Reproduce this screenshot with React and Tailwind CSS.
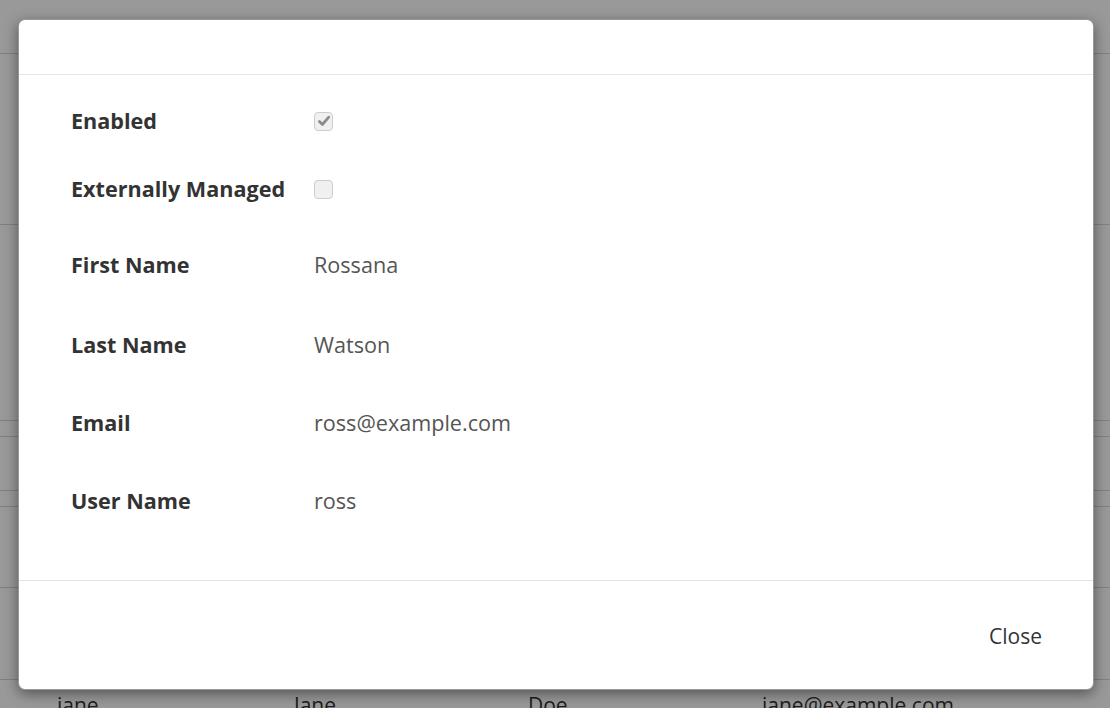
import { useState } from 'react';

const backdropRows = [54, 171, 196, 16, 54, 16, 81, 92];

function Checkbox({ checked }) {
  return (
    <span className="flex h-[19px] w-[19px] items-center justify-center rounded-[4px] border border-[#cdcdcd] bg-[#f0f0f0]">
      {checked && (
        <svg className="h-[14px] w-[14px]" viewBox="0 0 16 16" fill="none">
          <path d="M2.8 8.6 L6.2 12 L13.4 3.6" stroke="#8c8c8c" strokeWidth="3.2" strokeLinecap="round" strokeLinejoin="round" />
        </svg>
      )}
    </span>
  );
}

function Row({ label, children, className }) {
  return (
    <div className={`flex h-12 items-center pt-[2px] ${className}`}>
      <div className="w-[243px] text-[21.6px] font-bold text-[#333]">{label}</div>
      <div className="text-[21.6px] text-[#555]">{children}</div>
    </div>
  );
}

export default function App() {
  const [user] = useState({
    firstName: 'Rossana',
    lastName: 'Watson',
    email: 'ross@example.com',
    userName: 'ross'
  });

  return (
    <div className="relative h-[708px] w-[1110px] overflow-hidden bg-white" style={{ fontFamily: '"Open Sans", sans-serif' }}>
      {/* Page behind the modal */}
      <div>
        {backdropRows.map((h, i) => (
          <div key={i} className="border-b border-[#d6d6d6]" style={{ height: h }} />
        ))}
        <div className="flex pt-[10px] text-[21px] text-[#333]">
          <span className="w-[294px] pl-[57px]">jane</span>
          <span className="w-[234px]">Jane</span>
          <span className="w-[234px]">Doe</span>
          <span>jane@example.com</span>
        </div>
      </div>

      {/* Overlay */}
      <div className="absolute inset-0 bg-black/40" />

      {/* Modal */}
      <div className="absolute left-[18px] top-[19px] flex h-[671px] w-[1076px] flex-col rounded-[7px] border border-black/40 bg-white shadow-[0_4px_14px_rgba(0,0,0,0.45)]">
        <div className="h-[55px] border-b border-[#e5e5e5]" />

        <div className="pl-[52px] pt-[21px] pb-[56px]">
          <Row label="Enabled" className="mb-[20px]">
            <Checkbox checked />
          </Row>
          <Row label="Externally Managed" className="mb-[28px]">
            <Checkbox />
          </Row>
          <Row label="First Name" className="mb-[32px]">{user.firstName}</Row>
          <Row label="Last Name" className="mb-[30px]">{user.lastName}</Row>
          <Row label="Email" className="mb-[30px]">{user.email}</Row>
          <Row label="User Name">{user.userName}</Row>
        </div>

        <div className="flex flex-1 items-center justify-end border-t border-[#e5e5e5] pr-[51px] pt-[3px]">
          <button type="button" className="text-[21px] text-[#333]">
            Close
          </button>
        </div>
      </div>
    </div>
  );
}
